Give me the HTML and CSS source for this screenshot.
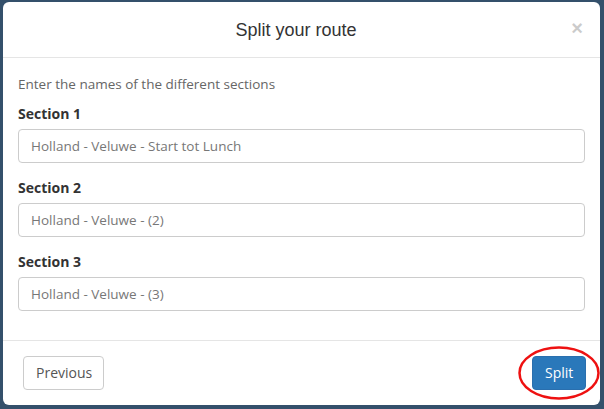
FILE: index.html
```html
<!DOCTYPE html>
<html>
<head>
<meta charset="utf-8">
<link rel="stylesheet" href="styles.css">
</head>
<body>
<div class="backdrop">
  <div class="modal">
    <div class="modal-header">
      <h4 class="modal-title">Split your route</h4>
      <span class="close">×</span>
    </div>
    <div class="modal-body">
      <p class="intro">Enter the names of the different sections</p>
      <div class="form-group">
        <label>Section 1</label>
        <input class="form-control" type="text" value="Holland - Veluwe - Start tot Lunch">
      </div>
      <div class="form-group">
        <label>Section 2</label>
        <input class="form-control" type="text" value="Holland - Veluwe - (2)">
      </div>
      <div class="form-group">
        <label>Section 3</label>
        <input class="form-control" type="text" value="Holland - Veluwe - (3)">
      </div>
    </div>
    <div class="modal-footer">
      <button class="btn btn-default">Previous</button>
      <div class="split-wrap">
        <button class="btn btn-primary">Split</button>
        <svg class="ring" width="84" height="56" viewBox="0 0 84 56"><ellipse cx="42" cy="28" rx="39.5" ry="25.5" fill="none" stroke="#ee1111" stroke-width="2.5"/></svg>
      </div>
    </div>
  </div>
</div>
</body>
</html>
```
FILE: styles.css
```css
* { box-sizing: border-box; }
html, body { margin: 0; padding: 0; }
body {
  width: 604px;
  height: 409px;
  background: #34506b;
  overflow: hidden;
  font-family: "Open Sans", "Liberation Sans", sans-serif;
  font-size: 13px;
  color: #333;
}
.backdrop {
  padding: 2px 4px 0 3px;
}
.modal {
  background: #fff;
  border-radius: 6px;
  width: 597px;
  display: flex;
  flex-direction: column;
}
.modal-header {
  flex-shrink: 0;
  height: 56px;
  border-bottom: 1px solid #e5e5e5;
  display: flex;
  align-items: center;
  justify-content: center;
  position: relative;
  padding: 0 26px 0 15px;
}
.modal-title {
  margin: 0;
  font-family: "Liberation Sans", Arial, sans-serif;
  font-weight: normal;
  font-size: 18px;
  color: #333;
  line-height: 26px;
  padding-top: 1px;
}
.close {
  position: absolute;
  right: 17px;
  top: 14px;
  font-family: "Liberation Sans", Arial, sans-serif;
  font-size: 20px;
  font-weight: bold;
  color: #000;
  opacity: 0.2;
  line-height: 24px;
}
.modal-body {
  flex-shrink: 0;
  padding: 16px 15px 14px 15px;
}
.intro {
  margin: 0 0 10px 0;
  line-height: 20px;
  color: #666;
  font-size: 13.5px;
}
.form-group {
  margin-bottom: 15px;
  display: flex;
  flex-direction: column;
}
label {
  font-weight: bold;
  font-size: 14px;
  line-height: 20px;
  margin-bottom: 5px;
  color: #333;
}
.form-control {
  width: 567px;
  height: 34px;
  padding: 6px 12px;
  font-family: "Open Sans", "Liberation Sans", sans-serif;
  font-size: 13.5px;
  color: #777;
  border: 1px solid #ccc;
  border-radius: 4px;
  background: #fff;
  outline: none;
}
.modal-footer {
  flex-shrink: 0;
  border-top: 1px solid #e5e5e5;
  padding: 15px 14px 15px 20px;
  display: flex;
  justify-content: space-between;
  align-items: center;
}
.btn {
  height: 34px;
  padding: 6px 12px;
  font-family: "Open Sans", "Liberation Sans", sans-serif;
  font-size: 14px;
  border-radius: 4px;
  line-height: 20px;
}
.btn-default {
  width: 81px;
  background: #fff;
  border: 1px solid #ccc;
  color: #555;
}
.btn-primary {
  width: 54px;
  background: #2a78ba;
  border: 1px solid #2a6fae;
  color: #fff;
}
.split-wrap {
  position: relative;
  display: flex;
}
.ring {
  position: absolute;
  left: -15px;
  top: -11px;
  pointer-events: none;
}
```
